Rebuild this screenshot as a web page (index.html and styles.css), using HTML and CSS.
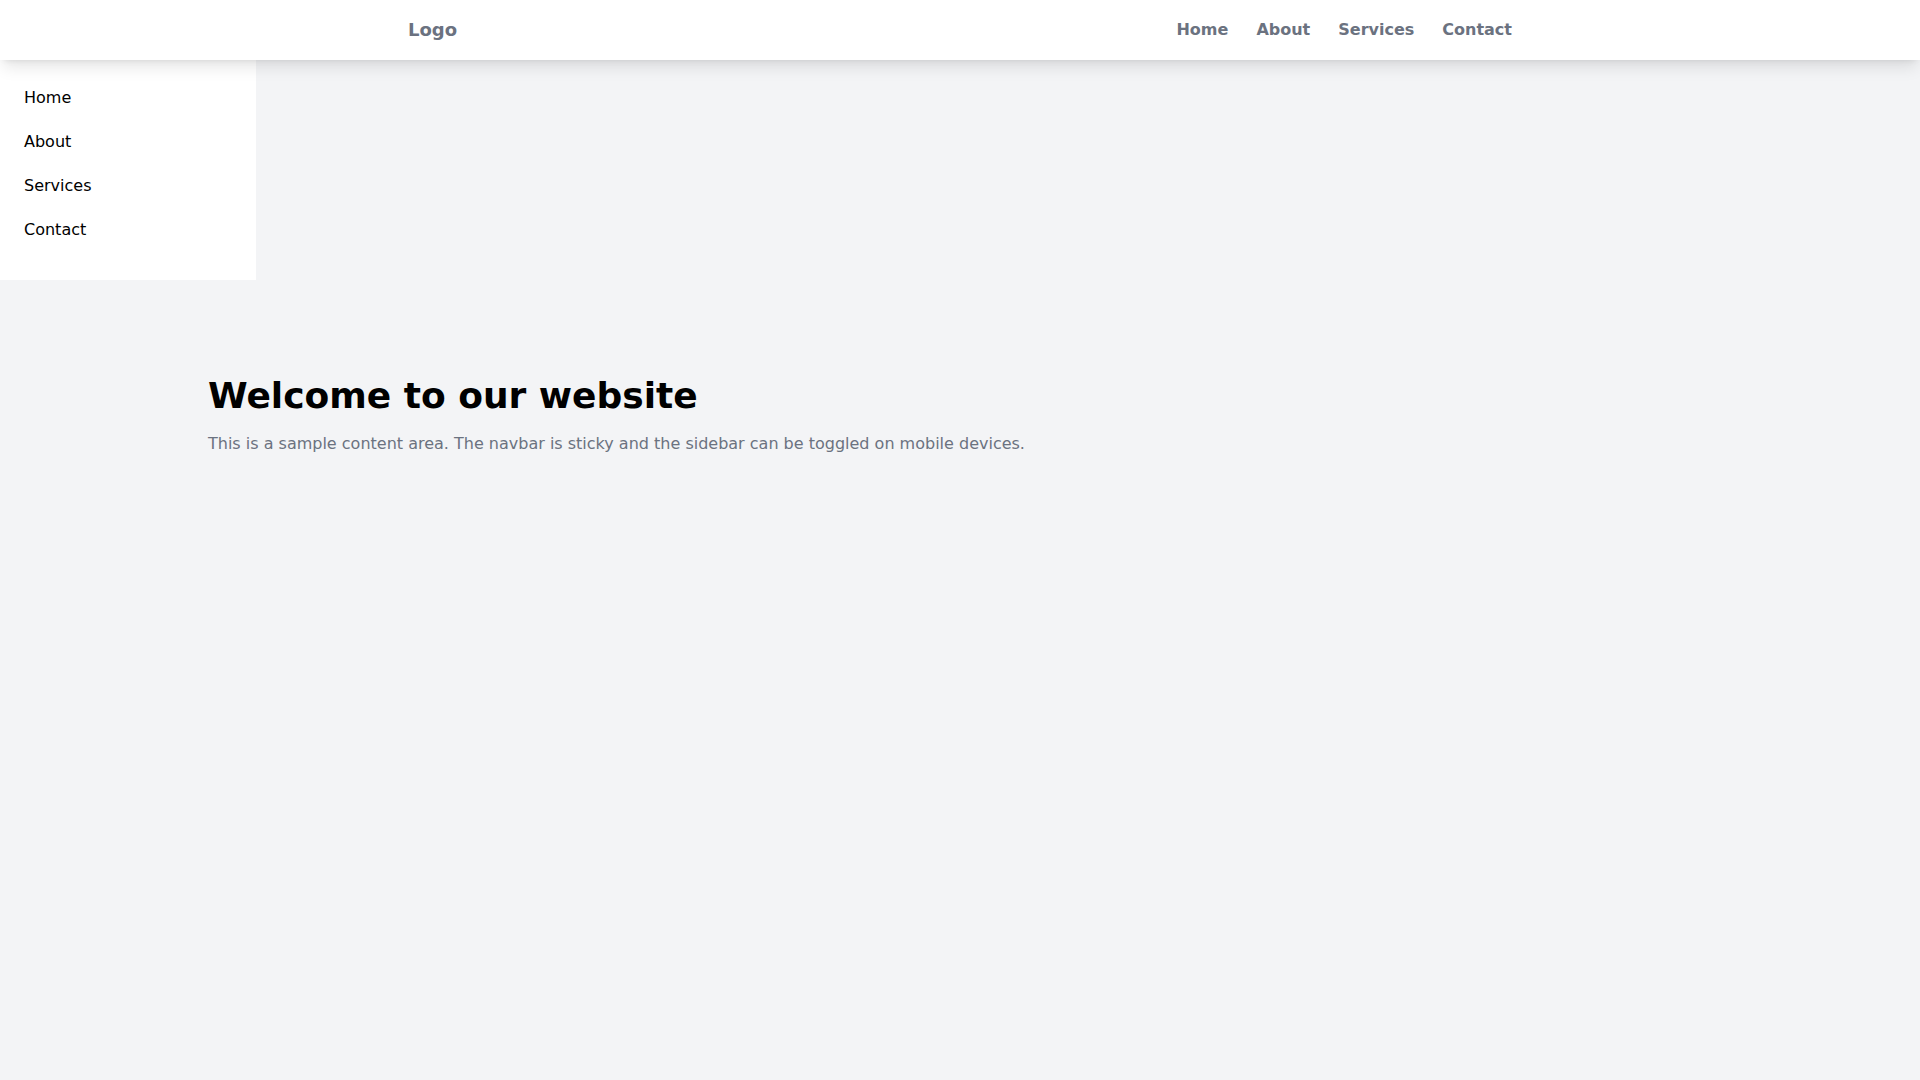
FILE: index.html
```html
<!DOCTYPE html>
<html lang="en">

<head>
  <meta charset="UTF-8">
  <meta name="viewport" content="width=device-width, initial-scale=1.0">
  <title>Sticky Navbar</title>
  <link rel="stylesheet" href="styles.css">
</head>

<body>
  <nav class="navbar">
    <div class="navbar-inner">
      <a href="#" class="logo">Logo</a>
      <div class="nav-links">
        <a href="#">Home</a>
        <a href="#">About</a>
        <a href="#">Services</a>
        <a href="#">Contact</a>
      </div>
    </div>
  </nav>

  <aside class="sidebar">
    <ul>
      <li><a href="#">Home</a></li>
      <li><a href="#">About</a></li>
      <li><a href="#">Services</a></li>
      <li><a href="#">Contact</a></li>
    </ul>
  </aside>

  <main class="content">
    <h1>Welcome to our website</h1>
    <p>This is a sample content area. The navbar is sticky and the sidebar can be toggled on mobile devices.</p>
  </main>
</body>

</html>
```

FILE: styles.css
```css
* {
  box-sizing: border-box;
}

body {
  font-family: "DejaVu Sans", sans-serif;
  margin: 0;
  padding: 0;
  background-color: #f3f4f6;
  min-height: 100vh;
}

a {
  text-decoration: none;
  color: inherit;
}

.navbar {
  position: sticky;
  top: 0;
  z-index: 10;
  background-color: #fff;
  box-shadow: 0 10px 15px -3px rgba(0, 0, 0, 0.1), 0 4px 6px -4px rgba(0, 0, 0, 0.1);
}

.navbar-inner {
  max-width: 1152px;
  margin: 0 auto;
  padding: 0 24px 1px;
  height: 60px;
  display: flex;
  justify-content: space-between;
  align-items: center;
}

.logo {
  font-size: 18px;
  font-weight: bold;
  color: #6b7280;
}

.nav-links {
  display: flex;
  gap: 28px;
}

.nav-links a {
  font-size: 16px;
  font-weight: bold;
  color: #6b7280;
}

.sidebar {
  width: 256px;
  background-color: #fff;
  padding: 16px 0 28px;
}

.sidebar ul {
  list-style: none;
  margin: 0;
  padding: 0;
}

.sidebar li a {
  display: block;
  padding: 10px 24px;
  font-size: 16px;
  line-height: 24px;
  color: #000;
}

.content {
  max-width: 1536px;
  margin: 0 auto;
  padding: 96px 16px;
}

.content h1 {
  font-size: 36px;
  line-height: 40px;
  font-weight: bold;
  margin: 0 0 16px;
  color: #000;
}

.content p {
  font-size: 16px;
  line-height: 24px;
  margin: 0;
  color: #6b7280;
}
```
